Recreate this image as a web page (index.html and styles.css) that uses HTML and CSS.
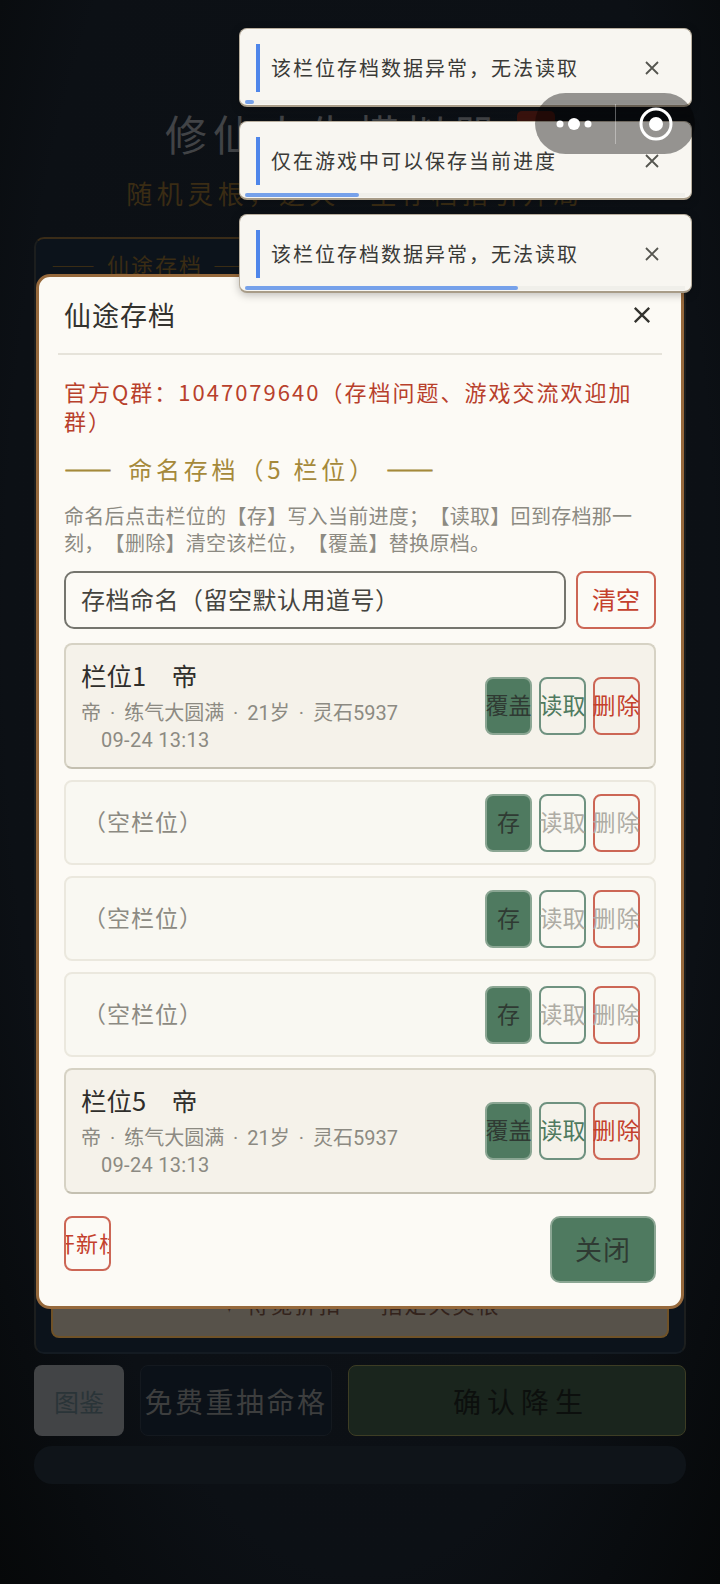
FILE: index.html
```html
<!DOCTYPE html>
<html lang="zh-CN">
<head>
  <meta charset="UTF-8" />
  <meta name="viewport" content="width=device-width, initial-scale=1.0"/>
  <title>修仙人生模拟器</title>
  <link rel="stylesheet" href="styles.css">
</head>
<body>
  <div class="app">
    <!-- page under the dialog -->
    <div class="title-row">
      <h1>修仙人生模拟器</h1>
      <span class="title-badge"></span>
    </div>
    <p class="subtitle">随机灵根，逆天一生存档指引开局</p>

    <div class="back-card">
      <div class="back-heading">—— 仙途存档 ——</div>
      <div class="back-gold">✦ 待觅折扣 · 指定天灵根</div>
    </div>

    <div class="back-actions">
      <div class="back-btn back-atlas">图鉴</div>
      <div class="back-btn back-reroll">免费重抽命格</div>
      <div class="back-btn back-confirm">确认降生</div>
    </div>
    <div class="back-pill"></div>

    <!-- save dialog -->
    <div class="modal">
      <div class="modal-head">
        <h2>仙途存档</h2>
        <svg class="modal-close" viewBox="0 0 20 20"><path d="M2 2 18 18M18 2 2 18"/></svg>
      </div>

      <p class="notice">官方Q群：1047079640（存档问题、游戏交流欢迎加群）</p>
      <h3 class="section-title"><span class="dash">——</span> 命名存档（5 栏位） <span class="dash">——</span></h3>
      <p class="desc">命名后点击栏位的【存】写入当前进度；【读取】回到存档那一刻，【删除】清空该栏位，【覆盖】替换原档。</p>

      <div class="name-row">
        <div class="name-input">存档命名（留空默认用道号）</div>
        <button class="clear-btn">清空</button>
      </div>

      <div class="slots">
        <div class="slot filled">
          <div class="slot-info">
            <div class="slot-name">栏位1　帝</div>
            <div class="slot-meta">帝 · 练气大圆满 · 21岁 · 灵石5937</div>
            <div class="slot-time">09-24 13:13</div>
          </div>
          <div class="slot-btns">
            <button class="btn btn-save">覆盖</button>
            <button class="btn btn-load">读取</button>
            <button class="btn btn-del">删除</button>
          </div>
        </div>

        <div class="slot empty">
          <div class="slot-info"><div class="slot-empty">（空栏位）</div></div>
          <div class="slot-btns">
            <button class="btn btn-save">存</button>
            <button class="btn btn-load off">读取</button>
            <button class="btn btn-del off">删除</button>
          </div>
        </div>

        <div class="slot empty">
          <div class="slot-info"><div class="slot-empty">（空栏位）</div></div>
          <div class="slot-btns">
            <button class="btn btn-save">存</button>
            <button class="btn btn-load off">读取</button>
            <button class="btn btn-del off">删除</button>
          </div>
        </div>

        <div class="slot empty">
          <div class="slot-info"><div class="slot-empty">（空栏位）</div></div>
          <div class="slot-btns">
            <button class="btn btn-save">存</button>
            <button class="btn btn-load off">读取</button>
            <button class="btn btn-del off">删除</button>
          </div>
        </div>

        <div class="slot filled">
          <div class="slot-info">
            <div class="slot-name">栏位5　帝</div>
            <div class="slot-meta">帝 · 练气大圆满 · 21岁 · 灵石5937</div>
            <div class="slot-time">09-24 13:13</div>
          </div>
          <div class="slot-btns">
            <button class="btn btn-save">覆盖</button>
            <button class="btn btn-load">读取</button>
            <button class="btn btn-del">删除</button>
          </div>
        </div>
      </div>

      <div class="modal-foot">
        <div class="new-btn"><span>开新栏</span></div>
        <button class="close-btn">关闭</button>
      </div>
    </div>

    <!-- toasts -->
    <div class="toasts">
      <div class="toast">
        <span class="toast-text">该栏位存档数据异常，无法读取</span>
        <svg class="toast-x" viewBox="0 0 16 16"><path d="M2 2 14 14M14 2 2 14"/></svg>
        <div class="toast-track"><div class="toast-bar" style="width:2%"></div></div>
      </div>
      <div class="toast">
        <span class="toast-text">仅在游戏中可以保存当前进度</span>
        <svg class="toast-x" viewBox="0 0 16 16"><path d="M2 2 14 14M14 2 2 14"/></svg>
        <div class="toast-track"><div class="toast-bar" style="width:26%"></div></div>
      </div>
      <div class="toast">
        <span class="toast-text">该栏位存档数据异常，无法读取</span>
        <svg class="toast-x" viewBox="0 0 16 16"><path d="M2 2 14 14M14 2 2 14"/></svg>
        <div class="toast-track"><div class="toast-bar" style="width:62%"></div></div>
      </div>
    </div>

    <!-- mini program capsule -->
    <div class="capsule">
      <svg class="capsule-dots" viewBox="0 0 36 14">
        <circle cx="4" cy="7" r="3.5"/><circle cx="18" cy="7" r="6"/><circle cx="32" cy="7" r="3.5"/>
      </svg>
      <span class="capsule-line"></span>
      <svg class="capsule-target" viewBox="0 0 36 36">
        <circle class="ring" cx="18" cy="18" r="15"/><circle cx="18" cy="18" r="7"/>
      </svg>
    </div>
  </div>
</body>
</html>
```

FILE: styles.css
```css
* {
  box-sizing: border-box;
}
body {
  margin: 0;
  background: #060809;
  font-family: "Noto Sans CJK SC", "Noto Sans", sans-serif;
  text-spacing-trim: space-all;
}
button {
  font-family: inherit;
  padding: 0;
  cursor: pointer;
}
.app {
  position: relative;
  width: 720px;
  height: 1584px;
  overflow: hidden;
  padding: 104px 34px 0;
  background: radial-gradient(ellipse at 50% 40%, #0d1116 0%, #0c1015 70%, #060809 100%);
}

/* page under the dialog */
.title-row {
  display: flex;
  justify-content: center;
  align-items: center;
  gap: 16px;
  height: 56px;
}
h1 {
  margin: 0;
  font-size: 42px;
  font-weight: 400;
  letter-spacing: 6px;
  color: #414346;
}
.title-badge {
  width: 38px;
  height: 42px;
  border-radius: 5px;
  background: #3a130e;
}
.subtitle {
  margin: 15px 0 0;
  padding-right: 10px;
  text-align: center;
  font-size: 26px;
  letter-spacing: 4.5px;
  line-height: 36px;
  color: #3a2c14;
}
.back-card {
  height: 1117px;
  margin-top: 26px;
  padding: 9px 15px 14px;
  border: 2px solid;
  border-color: #3a2c18 #1c1e1e #141b22;
  border-radius: 10px;
  background: #0c131b;
  display: flex;
  flex-direction: column;
  justify-content: space-between;
}
.back-heading {
  font-size: 22px;
  letter-spacing: 2px;
  word-spacing: 3px;
  color: #3a2c14;
}
.back-gold {
  height: 70px;
  padding-top: 20px;
  border: 2px solid #6f5228;
  border-top: 0;
  border-radius: 0 0 8px 8px;
  background: #57524a;
  text-align: center;
  font-size: 22px;
  line-height: 30px;
  letter-spacing: 2px;
  color: #33231c;
}
.back-actions {
  display: flex;
  gap: 16px;
  margin-top: 11px;
}
.back-btn {
  height: 71px;
  display: flex;
  align-items: center;
  justify-content: center;
  border-radius: 8px;
}
.back-atlas {
  width: 90px;
  background: #424446;
  font-size: 25px;
  color: #2a3438;
}
.back-reroll {
  width: 192px;
  background: #0b1118;
  border: 1px solid #14191f;
  font-size: 28px;
  letter-spacing: 2.5px;
  white-space: nowrap;
  color: #3d3e3e;
}
.back-confirm {
  flex: 1;
  padding-left: 8px;
  background: #1a251d;
  border: 1px solid #3d3d24;
  font-size: 28px;
  letter-spacing: 6px;
  color: #0c0f0d;
}
.back-pill {
  height: 38px;
  margin-top: 10px;
  border-radius: 18px;
  background: #0f1419;
}

/* save dialog */
.modal {
  position: absolute;
  left: 36px;
  top: 274px;
  width: 648px;
  height: 1035px;
  padding: 0 25px;
  background: #fcfaf5;
  border: 3px solid #96693c;
  border-radius: 14px;
}
.modal-head {
  display: flex;
  align-items: center;
  justify-content: space-between;
  height: 78px;
  margin: 0 -6px;
  padding: 0 6px;
  border-bottom: 2px solid #e6e3da;
}
.modal-head h2 {
  margin: 0 0 2px;
  font-size: 27px;
  font-weight: 400;
  letter-spacing: 1px;
  color: #33322e;
}
.modal-close {
  width: 18px;
  height: 18px;
  margin: 0 5px 0 0;
  fill: none;
  stroke: #33322e;
  stroke-width: 2.6;
}
.notice {
  margin: 22px 0 0;
  font-size: 22px;
  line-height: 29px;
  letter-spacing: 2px;
  color: #b8402c;
}
.section-title {
  margin: 16px 0 0;
  font-size: 24px;
  font-weight: 400;
  line-height: 36px;
  letter-spacing: 3.8px;
  color: #a5893a;
}
.dash {
  font-weight: 700;
  letter-spacing: 7px;
  -webkit-text-stroke: 0.8px #a5893a;
}
.desc {
  margin: 15px 0 0;
  font-size: 20px;
  line-height: 27px;
  letter-spacing: 0.3px;
  color: #8c8a82;
}
.name-row {
  display: flex;
  gap: 10px;
  margin-top: 15px;
}
.name-input {
  flex: 1;
  height: 58px;
  padding: 0 0 4px 15px;
  display: flex;
  align-items: center;
  border: 2px solid #75756e;
  border-radius: 10px;
  font-size: 24px;
  letter-spacing: 0.5px;
  color: #45443f;
}
.clear-btn {
  width: 80px;
  height: 58px;
  padding-bottom: 4px;
  border: 2px solid #cc6655;
  border-radius: 8px;
  background: transparent;
  font-size: 24px;
  color: #c4402c;
}
.slots {
  display: flex;
  flex-direction: column;
  gap: 11px;
  margin-top: 14px;
}
.slot {
  display: flex;
  align-items: center;
  justify-content: space-between;
  padding: 0 14px 0 15px;
  border-radius: 8px;
  border: 2px solid #ebe8de;
}
.slot.filled {
  height: 126px;
  background: #f5f2ea;
  border-color: #d6d2c4;
  border-bottom-color: #c4c0b1;
}
.slot.empty {
  height: 85px;
  background: #f9f8f2;
}
.slot-info {
  margin-bottom: 3px;
}
.slot-name {
  font-size: 25.5px;
  line-height: 38px;
  color: #2f2e2b;
}
.slot-meta,
.slot-time {
  font-family: Roboto, "Noto Sans CJK SC", sans-serif;
  font-size: 20px;
  line-height: 27px;
  color: #8c8a82;
}
.slot-meta {
  margin-top: 6px;
  word-spacing: 4px;
}
.slot-time {
  padding-left: 20px;
  letter-spacing: 0.3px;
}
.slot-empty {
  padding: 0 0 1px 2px;
  font-size: 23px;
  letter-spacing: 1px;
  color: #8c8a82;
}
.slot-btns {
  display: flex;
  gap: 7px;
}
.btn {
  width: 47px;
  height: 58px;
  padding-bottom: 4px;
  display: flex;
  align-items: center;
  justify-content: center;
  white-space: nowrap;
  border-radius: 8px;
  font-size: 23px;
  background: transparent;
}
.btn-save {
  background: #4f7a60;
  border: 2px solid #8ba693;
  color: #2f3a33;
}
.btn-load {
  border: 2px solid #6f9280;
  color: #4f7a60;
}
.btn-del {
  border: 2px solid #cc6655;
  letter-spacing: 1px;
  color: #c4402c;
}
.btn.off {
  color: #aeaca4;
}
.modal-foot {
  display: flex;
  justify-content: space-between;
  align-items: flex-start;
  margin-top: 22px;
}
.new-btn {
  width: 47px;
  height: 55px;
  padding-bottom: 4px;
  display: flex;
  align-items: center;
  justify-content: center;
  overflow: hidden;
  white-space: nowrap;
  border: 2px solid #cc6655;
  border-radius: 8px;
  font-size: 22px;
  letter-spacing: 1px;
  color: #c4402c;
}
.new-btn span {
  flex: none;
}
.close-btn {
  width: 106px;
  height: 67px;
  padding-bottom: 3px;
  background: #4f7a60;
  border: 2px solid #8ba693;
  border-radius: 10px;
  font-size: 27px;
  letter-spacing: 1px;
  color: #2f3a33;
}

/* toasts */
.toasts {
  position: absolute;
  left: 239px;
  top: 28px;
  width: 453px;
  display: flex;
  flex-direction: column;
  gap: 14px;
}
.toast {
  position: relative;
  height: 79px;
  padding-left: 31px;
  display: flex;
  align-items: center;
  background: #f8f6f1;
  border: 1px solid #b8ae9e;
  border-bottom: 2px solid #a89c88;
  border-radius: 8px;
  box-shadow: 0 2px 8px rgba(0, 0, 0, 0.25);
}
.toast::before {
  content: "";
  position: absolute;
  left: 16px;
  top: 15px;
  width: 4px;
  height: 48px;
  background: #4f86ea;
}
.toast-text {
  font-size: 20px;
  letter-spacing: 2px;
  color: #3a3a37;
}
.toast-x {
  position: absolute;
  right: 31px;
  top: 31px;
  width: 16px;
  height: 16px;
  fill: none;
  stroke: #55554f;
  stroke-width: 1.8;
}
.toast-track {
  position: absolute;
  left: 5px;
  right: 6px;
  bottom: 1px;
  height: 4px;
  background: #f0efea;
}
.toast-bar {
  height: 100%;
  border-radius: 2px;
  background: #76a1ea;
}

/* capsule */
.capsule {
  position: absolute;
  left: 535px;
  top: 93px;
  width: 160px;
  height: 61px;
  display: flex;
  align-items: center;
  border-radius: 31px;
  background: rgba(0, 0, 0, 0.4);
}
.capsule-dots {
  width: 36px;
  height: 14px;
  margin-left: 21px;
  fill: #fff;
}
.capsule-line {
  width: 1px;
  height: 40px;
  margin-left: 23px;
  background: rgba(255, 255, 255, 0.35);
}
.capsule-target {
  width: 36px;
  height: 36px;
  margin-left: 22px;
  fill: #fff;
}
.capsule-target .ring {
  fill: none;
  stroke: #fff;
  stroke-width: 3;
}
```
